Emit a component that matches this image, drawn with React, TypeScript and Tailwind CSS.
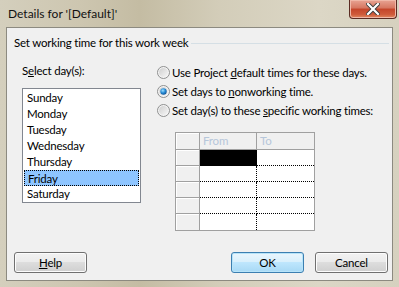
const days = ["Sunday", "Monday", "Tuesday", "Wednesday", "Thursday", "Friday", "Saturday"];

function Radio({ checked }: { checked?: boolean }) {
  return (
    <svg width="13" height="13" viewBox="0 0 13 13" className="shrink-0">
      <defs>
        <linearGradient id="rg" x1="0" y1="0" x2="1" y2="1">
          <stop offset="0" stopColor="#cfcfcf" />
          <stop offset="1" stopColor="#f6f6f6" />
        </linearGradient>
        <radialGradient id="dot" cx="0.4" cy="0.35" r="0.7">
          <stop offset="0" stopColor="#9fe0ff" />
          <stop offset="0.5" stopColor="#2a8fd8" />
          <stop offset="1" stopColor="#0b4f93" />
        </radialGradient>
      </defs>
      <circle cx="6.5" cy="6.5" r="6" fill="#f4f4f4" stroke="#8e8f8f" strokeWidth="1" />
      <circle cx="6.5" cy="6.5" r="4.5" fill="url(#rg)" />
      {checked && <circle cx="6.5" cy="6.5" r="3.2" fill="url(#dot)" />}
    </svg>
  );
}

function Button({ children, primary }: { children: React.ReactNode; primary?: boolean }) {
  return (
    <button
      className={
        "flex h-[21px] w-[73px] shrink-0 items-center justify-center rounded-[3px] border text-black " +
        (primary
          ? "border-[#3c7fb1] bg-[linear-gradient(#eaf6fd_0%,#d9f0fc_45%,#bee6fd_50%,#a7d9f5_100%)] shadow-[inset_0_0_0_1px_#b7e4f9]"
          : "border-[#707070] bg-[linear-gradient(#f2f2f2_0%,#ebebeb_45%,#dddddd_50%,#cfcfcf_100%)] shadow-[inset_0_0_0_1px_#fcfcfc]")
      }
    >
      {children}
    </button>
  );
}

export default function App() {
  return (
    <div
      className="flex h-[287px] w-[399px] flex-col bg-[linear-gradient(90deg,#d4cfbd_0%,#cdc6b0_20%,#c4bca3_35%,#d3cdb9_55%,#dcd7c6_80%,#d6d1bf_100%)] text-[11.5px] tracking-[-0.2px] text-black"
      style={{ fontFamily: 'Lato, "Liberation Sans", sans-serif' }}
    >
      <div className="flex h-[27px] items-start justify-between">
        <span className="pl-[8px] pt-[6px] text-[12px] leading-[16px] tracking-normal text-[#111]">Details for '[Default]'</span>
        <div className="mr-[2px] flex h-[19px] w-[48px] items-center justify-center rounded-b-[4px] border border-t-0 border-[#5a2b22] bg-[linear-gradient(#e8a493_0%,#d67660_45%,#c4452a_50%,#cf5a3a_80%,#e08a60_100%)] shadow-[inset_0_0_0_1px_#f0b8a8]">
          <svg width="14" height="12" viewBox="0 0 14 12">
            <path d="M2 1 L12 11 M12 1 L2 11" stroke="#3b3b3b" strokeWidth="4" strokeLinecap="square" />
            <path d="M2 1 L12 11 M12 1 L2 11" stroke="#ffffff" strokeWidth="2.2" strokeLinecap="square" />
          </svg>
        </div>
      </div>

      <div className="mx-[6px] mb-[6px] flex flex-1 flex-col border border-[#8c8a80] bg-[#f0f0f0]">
        <div className="flex items-center pl-[7px] pr-[3px] pt-[7px]">
          <span className="whitespace-nowrap leading-[16px]">Set working time for this work week</span>
          <div className="ml-[3px] h-px flex-1 bg-[#d5dfe5]" />
        </div>

        <div className="flex pl-[15px] pt-[12px]">
          <div className="flex w-[119px] shrink-0 flex-col">
            <span className="leading-[16px]">
              S<u>e</u>lect day(s):
            </span>
            <div className="mt-[9px] flex h-[115px] flex-col border border-[#828790] bg-white px-[1px] pt-[1px]">
              {days.map((d) => (
                <div
                  key={d}
                  className={
                    "h-[16px] pl-[3px] leading-[16px] " +
                    (d === "Friday" ? "border border-dotted border-black bg-[#8ec5ff] pl-[2px] leading-[14px]" : "")
                  }
                >
                  {d}
                </div>
              ))}
            </div>
          </div>

          <div className="ml-[16px] flex shrink-0 flex-col whitespace-nowrap">
            <div className="flex h-[19px] items-center gap-[2px]">
              <Radio />
              <span>
                Use Project <u>d</u>efault times for these days.
              </span>
            </div>
            <div className="flex h-[19px] items-center gap-[2px]">
              <Radio checked />
              <span>
                Set days to <u>n</u>onworking time.
              </span>
            </div>
            <div className="flex h-[19px] items-center gap-[2px]">
              <Radio />
              <span>
                Set day(s) to these <u>s</u>pecific working times:
              </span>
            </div>

            <div className="ml-[18px] mt-[12px] w-[140px] border border-[#a0a0a0] bg-white">
              <div className="grid grid-cols-[24px_57px_57px]">
                <div className="h-[17px] border-b border-r border-[#a0a0a0] bg-[#f0f0f0] shadow-[inset_1px_1px_0_#ffffff]" />
                <div className="h-[17px] border-b border-r border-[#a0a0a0] bg-[#f0f0f0] pl-[3px] leading-[16px] text-[#b6c6da]">
                  From
                </div>
                <div className="h-[17px] border-b border-[#a0a0a0] bg-[#f0f0f0] pl-[3px] leading-[16px] text-[#b6c6da]">To</div>
                {[0, 1, 2, 3, 4].map((r) => (
                  <div key={r} className="contents">
                    <div
                      className={
                        "h-[16px] border-r border-[#a0a0a0] bg-[#f0f0f0] shadow-[inset_1px_1px_0_#ffffff] " +
                        (r < 4 ? "border-b" : "")
                      }
                    />
                    <div
                      className={
                        "h-[16px] border-r border-dotted border-r-black " +
                        (r < 4 ? "border-b border-b-black " : "") +
                        (r === 0 ? "bg-black" : "bg-white")
                      }
                    />
                    <div className={"h-[16px] bg-white " + (r < 4 ? "border-b border-dotted border-b-black" : "")} />
                  </div>
                ))}
              </div>
            </div>
          </div>
        </div>

        <div className="mt-auto flex items-center pb-[7px] pl-[7px] pr-[4px]">
          <Button>
            <u>H</u>elp
          </Button>
          <div className="flex-1" />
          <Button primary>OK</Button>
          <div className="w-[11px]" />
          <Button>Cancel</Button>
        </div>
      </div>
    </div>
  );
}
